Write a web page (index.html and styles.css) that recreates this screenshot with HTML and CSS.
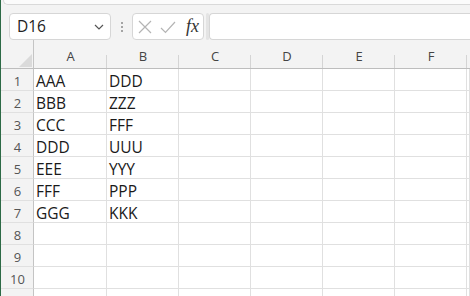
FILE: index.html
```html
<!DOCTYPE html>
<html>
<head>
<meta charset="utf-8">
<link rel="stylesheet" href="styles.css">
</head>
<body>
<div class="app">
  <div class="ribbon-edge"></div>
  <div class="fbar">
    <div class="namebox">
      <span class="name">D16</span>
      <svg class="chev" width="10" height="6" viewBox="0 0 10 6"><path d="M1 1 L5 5 L9 1" fill="none" stroke="#555" stroke-width="1.2"/></svg>
    </div>
    <div class="dots"><i></i><i></i><i></i></div>
    <div class="fxbox">
      <svg class="ico" width="14" height="14" viewBox="0 0 14 14"><path d="M1 1 L13 13 M13 1 L1 13" stroke="#b4b4b4" stroke-width="1.2" fill="none"/></svg>
      <svg class="ico" width="16" height="14" viewBox="0 0 16 14"><path d="M1 8 L5.5 12.5 L15 2" stroke="#b4b4b4" stroke-width="1.2" fill="none"/></svg>
      <span class="fx">fx</span>
    </div>
    <div class="splitter"></div>
    <div class="formula"></div>
  </div>
  <div class="grid">
    <div class="corner"><svg width="34" height="29" viewBox="0 0 34 29"><path d="M19 27 L32 14 L32 27 Z" fill="#dadada"/></svg></div>
    <div class="ch">A</div><div class="ch">B</div><div class="ch">C</div><div class="ch">D</div><div class="ch">E</div><div class="ch">F</div><div class="ch last"></div>

    <div class="rh">1</div><div class="c">AAA</div><div class="c">DDD</div><div class="c"></div><div class="c"></div><div class="c"></div><div class="c"></div><div class="c"></div>
    <div class="rh">2</div><div class="c">BBB</div><div class="c">ZZZ</div><div class="c"></div><div class="c"></div><div class="c"></div><div class="c"></div><div class="c"></div>
    <div class="rh">3</div><div class="c">CCC</div><div class="c">FFF</div><div class="c"></div><div class="c"></div><div class="c"></div><div class="c"></div><div class="c"></div>
    <div class="rh">4</div><div class="c">DDD</div><div class="c">UUU</div><div class="c"></div><div class="c"></div><div class="c"></div><div class="c"></div><div class="c"></div>
    <div class="rh">5</div><div class="c">EEE</div><div class="c">YYY</div><div class="c"></div><div class="c"></div><div class="c"></div><div class="c"></div><div class="c"></div>
    <div class="rh">6</div><div class="c">FFF</div><div class="c">PPP</div><div class="c"></div><div class="c"></div><div class="c"></div><div class="c"></div><div class="c"></div>
    <div class="rh">7</div><div class="c">GGG</div><div class="c">KKK</div><div class="c"></div><div class="c"></div><div class="c"></div><div class="c"></div><div class="c"></div>
    <div class="rh">8</div><div class="c"></div><div class="c"></div><div class="c"></div><div class="c"></div><div class="c"></div><div class="c"></div><div class="c"></div>
    <div class="rh">9</div><div class="c"></div><div class="c"></div><div class="c"></div><div class="c"></div><div class="c"></div><div class="c"></div><div class="c"></div>
    <div class="rh">10</div><div class="c"></div><div class="c"></div><div class="c"></div><div class="c"></div><div class="c"></div><div class="c"></div><div class="c"></div>
    <div class="rh"></div><div class="c"></div><div class="c"></div><div class="c"></div><div class="c"></div><div class="c"></div><div class="c"></div><div class="c"></div>
  </div>
</div>
</body>
</html>
```
FILE: styles.css
```css
* { box-sizing: border-box; }
html, body { margin: 0; padding: 0; }
body {
  width: 470px;
  height: 296px;
  overflow: hidden;
  background: #ffffff;
  font-family: "Open Sans", "Noto Sans", sans-serif;
}
.app {
  height: 296px;
  border-left: 1px solid #2d6a46;
  background: #f3f3f3;
  display: flex;
  flex-direction: column;
  overflow: hidden;
}
.ribbon-edge {
  height: 5px;
  margin-left: 2px;
  background: #fbfbfb;
  border-bottom: 1px solid #d9d9d9;
  border-left: 1px solid #d9d9d9;
  border-bottom-left-radius: 7px;
  flex: none;
}
.fbar {
  flex: none;
  height: 35px;
  padding: 8px 0 0 8px;
  display: flex;
  align-items: stretch;
}
.namebox {
  width: 102px;
  height: 27px;
  background: #fff;
  border: 1px solid #d6d6d6;
  border-radius: 4px;
  display: flex;
  align-items: center;
  justify-content: space-between;
  padding: 0 6px 0 7px;
}
.name {
  font-size: 15.5px;
  color: #222;
  line-height: 1;
}
.chev { margin-top: 1px; }
.dots {
  width: 21px;
  height: 27px;
  display: flex;
  flex-direction: column;
  align-items: center;
  justify-content: center;
  gap: 2px;
}
.dots i {
  display: block;
  width: 2px;
  height: 2px;
  background: #8a8a8a;
  border-radius: 1px;
}
.fxbox {
  width: 72px;
  height: 27px;
  background: #fff;
  border: 1px solid #d6d6d6;
  border-radius: 4px;
  display: flex;
  align-items: center;
  padding: 0 0 0 5px;
  gap: 8px;
}
.fx {
  font-family: "Liberation Serif", "DejaVu Serif", serif;
  font-style: italic;
  font-size: 18px;
  color: #333;
  line-height: 1;
  margin-left: 2px;
  margin-top: -2px;
}
.splitter {
  width: 3px;
  height: 27px;
  margin-left: 2px;
  background: #e4e4e4;
  border-radius: 2px;
}
.formula {
  flex: 1;
  height: 27px;
  background: #fff;
  border: 1px solid #d6d6d6;
  border-right: none;
  border-radius: 4px 0 0 4px;
  margin-left: 0;
}
.grid {
  flex: none;
  display: grid;
  grid-template-columns: 33px 73px repeat(5, 72px) 1fr;
  grid-template-rows: 29px repeat(11, 22px);
  background: #fff;
}
.corner {
  background: #f3f3f3;
  border-right: 1px solid #c4c4c4;
  border-bottom: 1px solid #bdbdbd;
  line-height: 0;
  margin-left: -1px;
  width: 34px;
}
.ch {
  background: #f3f3f3;
  border-bottom: 1px solid #bdbdbd;
  font-size: 13px;
  color: #444;
  text-align: center;
  padding-top: 8px;
  line-height: 16px;
  position: relative;
}
.ch::after {
  content: "";
  position: absolute;
  right: 0;
  bottom: 0;
  width: 1px;
  height: 13px;
  background: #d4d4d4;
}
.ch.last::after { display: none; }
.rh {
  background: #f3f3f3;
  border-right: 1px solid #c4c4c4;
  border-bottom: 1px solid #e0e0e0;
  font-size: 13px;
  color: #555;
  text-align: center;
  line-height: 22px;
  padding-top: 1px;
  padding-left: 1px;
}
.c {
  border-right: 1px solid #e0e0e0;
  border-bottom: 1px solid #e0e0e0;
  font-size: 15.5px;
  color: #1a1a1a;
  padding-left: 2px;
  line-height: 22px;
  padding-top: 1px;
  white-space: nowrap;
}
```
